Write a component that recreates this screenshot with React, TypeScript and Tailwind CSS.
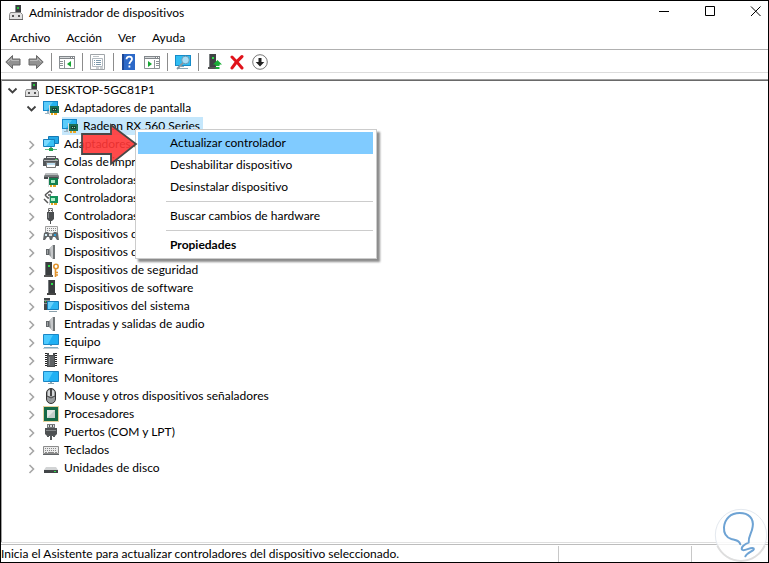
import { useState } from 'react';
import type { ReactNode } from 'react';

function Svg({ children }: { children: ReactNode }) {
  return (
    <svg viewBox="0 0 16 16" className="w-4 h-4 shrink-0" fill="none" aria-hidden="true">
      {children}
    </svg>
  );
}

const ComputerIcon = () => (
  <Svg>
    <path d="M7 0h6v8H7z" fill="#3c3f42" />
    <path d="M7 0h1v8H7z" fill="#85898c" />
    <path d="M9 2h2v2H9z" fill="#25c13b" />
    <path d="M2.500 7.500h10l2 2v5h-13v-5z" fill="#e2e2e2" stroke="#8a8a8a" />
    <path d="M4 10h2v2H4zM10 10h2v2h-2z" fill="#555" />
    <path d="M1 14h14v1H1z" fill="#666" />
  </Svg>
);

const DisplayAdapterIcon = () => (
  <Svg>
    <path d="M0 1h15v10H0z" fill="#1687c9" />
    <path d="M1 2h13v8H1z" fill="#27b3ef" />
    <path d="M1 2h9l-6 8H1z" fill="#5accfa" />
    <path d="M2 13h4v1H2zM4 11h2v2H4z" fill="#9bb5c4" />
    <path d="M7 6h9v7H7z" fill="#1b6f54" />
    <path d="M9 8h5v3H9z" fill="#173f35" />
    <path d="M10 9h1v1h-1zM12 9h1v1h-1z" fill="#8ddbb0" />
    <path d="M8 13h2v2H8zM11 13h3v2h-3z" fill="#eda81e" />
    <path d="M6 5h1v10H6z" fill="#d8dcdf" />
  </Svg>
);

const NetworkIcon = () => (
  <Svg>
    <path d="M5.500.5h10v7h-10z" fill="#24a9e7" stroke="#1579b4" />
    <path d="M.5 3.500h11v7H.5z" fill="#3cc2f5" stroke="#1680bd" />
    <path d="M1 4h7l-5 6H1z" fill="#7adaff" />
    <path d="M7 11h2v2H7z" fill="#83a58d" />
    <path d="M2 13h12v1H2z" fill="#66b887" />
    <path d="M6 12h4v3H6z" fill="#23a34f" />
  </Svg>
);

const PrinterIcon = () => (
  <Svg>
    <path d="M3 2h10v3H3z" fill="#55595d" />
    <path d="M4 3h8v1H4z" fill="#d9d9d9" />
    <path d="M1 4h14l1 2v6H0V6z" fill="#53575a" />
    <path d="M1 6h14v1H1z" fill="#b0b3b5" />
    <path d="M3.500 8.500h9v5h-9z" fill="#fff" stroke="#777" />
    <path d="M4 9h8v2H4z" fill="#bfe0f2" />
    <path d="M12 5h2v1h-2z" fill="#4ed35e" />
  </Svg>
);

const StorageControllerIcon = () => (
  <Svg>
    <path d="M3 1h11l2 3v3H1V4z" fill="#777b7d" />
    <path d="M3 1h11l1 2H2z" fill="#b9bcbe" />
    <path d="M1 5h14v2H1z" fill="#484c4e" />
    <path d="M6 6h9v7H6z" fill="#137f4f" />
    <path d="M8 8h4v3H8z" fill="#abebc7" />
    <path d="M7 13h2v2H7zM10 13h3v2h-3z" fill="#e2a423" />
    <path d="M5 5h1v10H5z" fill="#dcdfe1" />
  </Svg>
);

const IdeControllerIcon = () => (
  <Svg>
    <path d="M2 5l5-4 2 2M2 5l3 3h3" stroke="#555" strokeWidth="1.500" />
    <path d="M5 5h3M1 9l4 4" stroke="#555" strokeWidth="1.500" />
    <path d="M7 6h8v7H7z" fill="#15935a" />
    <path d="M8 8h4v3H8z" fill="#b0efcb" />
    <path d="M8 13h2v2H8zM11 13h3v2h-3z" fill="#e2a423" />
    <path d="M6 6h1v9H6z" fill="#bfc5c7" />
  </Svg>
);

const UsbIcon = () => (
  <Svg>
    <path d="M5.500.5h4v4h-4z" fill="#eee" stroke="#777" />
    <path d="M6 2h1v1H6zM8 2h1v1H8z" fill="#444" />
    <path d="M4 4h7v7l-2 2H6l-2-2z" fill="#4b4e50" />
    <path d="M5 5h1v5H5z" fill="#818588" />
    <path d="M7 12h1v4H7z" fill="#4b4e50" />
  </Svg>
);

const GameIcon = () => (
  <Svg>
    <path d="M2.500.5h12v7h-12z" fill="#f2f2f2" stroke="#a0a0a0" />
    <path d="M4 2.500h10M4 4.500h10" stroke="#888" strokeDasharray="1 1" />
    <path d="M0 14l1-7 2-1h2l2 2h2l2-2h2l2 1 1 7h-2l-2-3h-2l-1 3H7l-1-3H4l-2 3z" fill="#63686b" />
    <path d="M2 8h2v2H2z" fill="#d5eef7" />
    <path d="M11 8h2v2h-2z" fill="#2a9ed6" />
    <path d="M6 8h3v2H6z" fill="#dedede" />
  </Svg>
);

const SpeakerIcon = () => (
  <Svg>
    <path d="M3 5h3v6H3z" fill="#62676a" />
    <path d="M6 5l4-4v14l-4-4z" fill="#8b8f92" />
    <path d="M7 4l3-3v14l-2-2z" fill="#c6c8ca" />
    <path d="M11 1v14" stroke="#707476" strokeWidth="2" />
    <path d="M4 6h1v4H4z" fill="#a0a2a4" />
  </Svg>
);

const SecurityIcon = () => (
  <Svg>
    <path d="M2 0h7v14H2z" fill="#3b3e40" />
    <path d="M2 0h1v14H2z" fill="#787c7e" />
    <path d="M5 3h2v2H5z" fill="#2ee04a" />
    <path d="M1 13h9v2H1z" fill="#555" />
    <circle cx="13" cy="4.500" r="2.200" stroke="#e2942e" strokeWidth="1.600" />
    <path d="M12.500 7v8M13 10.500h2M13 13h2" stroke="#e2942e" strokeWidth="1.600" />
  </Svg>
);

const SoftwareIcon = () => (
  <Svg>
    <path d="M5 0h7v14H5z" fill="#393c3e" />
    <path d="M5 0h1v14H5z" fill="#73777a" />
    <path d="M8 3h2v2H8z" fill="#2ee04a" />
    <path d="M4 13h9v2H4z" fill="#444" />
  </Svg>
);

const SystemIcon = () => (
  <Svg>
    <path d="M1 0h6v12H1z" fill="#44484a" />
    <path d="M1 2h6v1H1zM1 5h6v1H1z" fill="#8d9193" />
    <path d="M2 3h1v1H2z" fill="#2ee04a" />
    <path d="M4.500 3.500h11v8h-11z" fill="#2cb5f1" stroke="#177eb9" />
    <path d="M5 4h6l-4 7H5z" fill="#68d1fb" />
    <path d="M6 13h8v1H6z" fill="#8aa0ab" />
  </Svg>
);

const PcIcon = () => (
  <Svg>
    <path d="M.5.5h15v10H.5z" fill="#1fb0f4" stroke="#1b86c5" />
    <path d="M1 1h9l-5 9H1z" fill="#4bcaff" />
    <path d="M7 11h2v1H7z" fill="#90a8b5" />
    <path d="M1 13h14v1H1z" fill="#7fabc2" />
    <path d="M0 14h16v1H0z" fill="#c3ced5" />
  </Svg>
);

const FirmwareIcon = () => (
  <Svg>
    <path d="M4 1h2v2h4V1h2v14H4z" fill="#4b4e50" />
    <path d="M5 4h6v10H5z" fill="#5f6366" />
    <path d="M3 1v14M13 1v14" stroke="#222" strokeWidth="2" strokeDasharray="1 1" />
    <path d="M6 5h1v8H6z" fill="#8b8f92" />
  </Svg>
);

const MonitorIcon = () => (
  <Svg>
    <path d="M.5 1.500h15v10H.5z" fill="#1fb0f4" stroke="#1b86c5" />
    <path d="M1 2h9l-5 9H1z" fill="#4bcaff" />
    <path d="M7 12h2v1H7z" fill="#90a8b5" />
    <path d="M5 13h6v1H5z" fill="#8ba3af" />
  </Svg>
);

const MouseIcon = () => (
  <Svg>
    <rect x="3.500" y="0.500" width="9" height="15" rx="4.500" fill="#9a9d9f" stroke="#333" />
    <path d="M5 3l2-1v6H5zM9 2l2 1v5H9z" fill="#d5d7d8" />
    <path d="M7 1h2v7H7z" fill="#444" />
    <path d="M4 8l4 2 4-2" stroke="#444" />
  </Svg>
);

const ProcessorIcon = () => (
  <Svg>
    <rect x="0.500" y="0.500" width="15" height="15" stroke="#cba43b" strokeDasharray="1 1" />
    <path d="M1 1h14v14H1z" fill="#166947" />
    <path d="M4 4h8v8H4z" fill="#c5cecb" />
    <path d="M4 4h8l-8 8z" fill="#e3e7e5" />
  </Svg>
);

const PortIcon = () => (
  <Svg>
    <path d="M4 0h8v4H4z" fill="#777b7d" />
    <path d="M5 1h6v2H5z" fill="#d9dbdc" />
    <path d="M6 1h1v2H6zM9 1h1v2H9z" fill="#555" />
    <path d="M2 4h12v6l-2 2H4l-2-2z" fill="#4e5153" />
    <path d="M3 6h10v1H3z" fill="#85898b" />
    <path d="M4 11h2v2H4zM7 11h2v5H7zM10 11h2v2h-2z" fill="#55595b" />
  </Svg>
);

const KeyboardIcon = () => (
  <Svg>
    <path d="M.5 4.500h15v7H.5z" fill="#ececec" stroke="#8c8c8c" />
    <path d="M2 6.500h12M2 8.500h12" stroke="#888" strokeDasharray="1 1" />
    <path d="M2 10.500h2M5 10.500h6M12 10.500h2" stroke="#888" />
    <path d="M0 12h16v1H0z" fill="#606467" />
  </Svg>
);

const DiskIcon = () => (
  <Svg>
    <path d="M3 7h10l2 3H1z" fill="#d2d4d5" />
    <path d="M1 10h14v3H1z" fill="#424648" />
    <path d="M11 11h2v1h-2z" fill="#2ee04a" />
  </Svg>
);

const ArrowIcon = ({ flip }: { flip?: boolean }) => (
  <svg viewBox="0 0 16 16" className={flip ? 'w-4 h-4 -scale-x-100' : 'w-4 h-4'} aria-hidden="true">
    <path d="M.8 8L7.500 1.500V5H15v6H7.500v3.500z" fill="#929292" stroke="#686868" />
    <path d="M3 8l3.500-3.500v2H14" fill="none" stroke="#b9b9b9" />
  </svg>
);

const PaneIcon = ({ right }: { right?: boolean }) => (
  <Svg>
    <path d="M.5 2.500h15v12H.5z" fill="#fff" stroke="#8b9094" />
    <path d="M0 2h16v3H0z" fill="#82878b" />
    <path d="M1 3h10v1H1z" fill="#d6d9db" />
    <path d="M12 3h1v1h-1zM14 3h1v1h-1z" fill="#fff" />
    <path d={right ? 'M10.500 6v8' : 'M5.500 6v8'} stroke="#8b9094" />
    {right ? (
      <>
        <path d="M4 7v6l4-3z" fill="#15a532" />
        <path d="M12 7.500h3M12 9.500h3M12 11.500h3" stroke="#8b9094" />
      </>
    ) : (
      <>
        <path d="M12 7v6l-4-3z" fill="#15a532" />
        <path d="M1 7.500h3M1 9.500h3M1 11.500h3" stroke="#8b9094" />
      </>
    )}
  </Svg>
);

const PropertiesIcon = () => (
  <Svg>
    <path d="M.5.5h14v15H.5z" fill="#fff" stroke="#a0a5a9" />
    <path d="M2.500 4.500h10v8h-10z" stroke="#b3bac0" />
    <path d="M3 2.500h6" stroke="#bcc2c6" />
    <path d="M4 6.500h1M6 6.500h5M4 8.500h1M6 8.500h5M4 10.500h1M6 10.500h5" stroke="#7b98ab" />
    <path d="M6 14h3M10 14h3" stroke="#9aa2a9" />
  </Svg>
);

const HelpIcon = () => (
  <Svg>
    <path d="M1 0h13v16H1z" fill="#2c69c8" />
    <path d="M1 0h2v16H1z" fill="#1d4897" />
    <path d="M5.500 5.200C5.500 1.600 11 1.800 11 5c0 2.300-2.600 2.400-2.600 5M8.400 11.500v2" stroke="#fff" strokeWidth="1.800" />
  </Svg>
);

const ScanIcon = () => (
  <Svg>
    <path d="M0 1h16v11H0z" fill="#168bc8" />
    <path d="M1 2h14v9H1z" fill="#30bdf2" />
    <path d="M6 12h3v1H6zM3 14h10v1H3z" fill="#8aa7b6" />
    <circle cx="10.500" cy="6" r="3.800" fill="#a9ddf5" stroke="#6b9cb6" />
    <path d="M8 9l-6 6" stroke="#8798a2" strokeWidth="1.800" />
  </Svg>
);

const UpdateIcon = () => (
  <Svg>
    <path d="M3 0h7v14H3z" fill="#3f4244" />
    <path d="M3 0h1v14H3z" fill="#7b7f81" />
    <path d="M6 3h2v2H6z" fill="#2ee04a" />
    <path d="M2 13h8v2H2z" fill="#555" />
    <path d="M11.500 6L16 10.500h-2.500V12h-4v-1.500H7z" fill="#18ae36" />
    <path d="M9.500 13h4v2h-4z" fill="#18ae36" />
  </Svg>
);

const RemoveIcon = () => (
  <Svg>
    <path d="M3 3c3 3 6 6 10 11M13 2.500C9 6 6 9 3 14" stroke="#e0131b" strokeWidth="3" strokeLinecap="round" />
  </Svg>
);

const DisableIcon = () => (
  <Svg>
    <circle cx="8" cy="8" r="7.300" fill="#fff" stroke="#777" />
    <path d="M6.500 4h3v4h2.800L8 12.500 3.700 8h2.800z" fill="#222" />
  </Svg>
);

function Chevron({ open }: { open: boolean }) {
  return (
    <svg viewBox="0 0 12 12" className="w-3 h-3" fill="none" aria-hidden="true">
      {open ? (
        <path d="M1.500 4.500l4 4 4-4" stroke="#404040" strokeWidth="1.800" />
      ) : (
        <path d="M3.500 3l4 4-4 4" stroke="#a6a6a6" strokeWidth="1.600" />
      )}
    </svg>
  );
}

const devices = [
  { name: 'Adaptadores de red', icon: <NetworkIcon /> },
  { name: 'Colas de impresión', icon: <PrinterIcon /> },
  { name: 'Controladoras', icon: <StorageControllerIcon /> },
  { name: 'Controladoras', icon: <IdeControllerIcon /> },
  { name: 'Controladoras', icon: <UsbIcon /> },
  { name: 'Dispositivos de', icon: <GameIcon /> },
  { name: 'Dispositivos de', icon: <SpeakerIcon /> },
  { name: 'Dispositivos de seguridad', icon: <SecurityIcon /> },
  { name: 'Dispositivos de software', icon: <SoftwareIcon /> },
  { name: 'Dispositivos del sistema', icon: <SystemIcon /> },
  { name: 'Entradas y salidas de audio', icon: <SpeakerIcon /> },
  { name: 'Equipo', icon: <PcIcon /> },
  { name: 'Firmware', icon: <FirmwareIcon /> },
  { name: 'Monitores', icon: <MonitorIcon /> },
  { name: 'Mouse y otros dispositivos señaladores', icon: <MouseIcon /> },
  { name: 'Procesadores', icon: <ProcessorIcon /> },
  { name: 'Puertos (COM y LPT)', icon: <PortIcon /> },
  { name: 'Teclados', icon: <KeyboardIcon /> },
  { name: 'Unidades de disco', icon: <DiskIcon /> },
];

const tools = [
  { label: 'Atrás', icon: <ArrowIcon /> },
  { label: 'Adelante', icon: <ArrowIcon flip /> },
  null,
  { label: 'Mostrar u ocultar árbol', icon: <PaneIcon /> },
  null,
  { label: 'Propiedades', icon: <PropertiesIcon /> },
  null,
  { label: 'Ayuda', icon: <HelpIcon /> },
  { label: 'Mostrar u ocultar panel', icon: <PaneIcon right /> },
  null,
  { label: 'Buscar cambios de hardware', icon: <ScanIcon /> },
  null,
  { label: 'Actualizar controlador', icon: <UpdateIcon /> },
  { label: 'Desinstalar dispositivo', icon: <RemoveIcon /> },
  { label: 'Deshabilitar dispositivo', icon: <DisableIcon /> },
];

const menuItems = [
  'Actualizar controlador',
  'Deshabilitar dispositivo',
  'Desinstalar dispositivo',
  null,
  'Buscar cambios de hardware',
  null,
  'Propiedades',
];

function TreeRow({ name, icon, open, onToggle }: { name: string; icon: ReactNode; open: boolean; onToggle?: () => void }) {
  return (
    <div className="flex items-center gap-[5px] h-[18px]">
      <button type="button" aria-label={name} aria-expanded={open} onClick={onToggle}>
        <Chevron open={open} />
      </button>
      {icon}
      <span>{name}</span>
    </div>
  );
}

function ContextMenu() {
  const [active, setActive] = useState('Actualizar controlador');

  return (
    <div
      role="menu"
      className="absolute left-[133px] top-[49px] w-[242px] p-[2px] pr-[3px] bg-white border border-[#ccc] shadow-[3px_3px_2px_rgba(0,0,0,0.45)]"
    >
      {menuItems.map((item, idx) =>
        item === null ? (
          <div key={idx} role="separator" className="h-px my-[3px] ml-7 bg-[#ccc]" />
        ) : (
          <button
            key={idx}
            type="button"
            role="menuitem"
            onMouseEnter={() => setActive(item)}
            className={`block w-full h-[22px] pl-8 text-left ${active === item ? 'bg-[#80cbff]' : ''} ${item === 'Propiedades' ? 'font-bold' : ''}`}
          >
            {item}
          </button>
        )
      )}
    </div>
  );
}

function App() {
  const [rootOpen, setRootOpen] = useState(true);
  const [displayOpen, setDisplayOpen] = useState(true);

  return (
    <div className="relative flex flex-col h-screen overflow-hidden bg-white border border-black text-black text-[12px] leading-[18px] [font-variant-ligatures:none] font-[Lato,'Open_Sans',sans-serif]">
      <header className="flex items-center justify-between h-6 px-[7px] shrink-0">
        <div className="flex items-center gap-[5px]">
          <ComputerIcon />
          <h1>Administrador de dispositivos</h1>
        </div>
        <div className="flex items-center gap-[35px] pb-1">
          <button type="button" aria-label="Minimizar">
            <svg viewBox="0 0 11 11" className="w-[11px] h-[11px]"><path d="M1 5.500h10" stroke="#000" /></svg>
          </button>
          <button type="button" aria-label="Maximizar">
            <svg viewBox="0 0 11 11" className="w-[11px] h-[11px]"><path d="M1.500.5h9v9h-9z" fill="none" stroke="#000" /></svg>
          </button>
          <button type="button" aria-label="Cerrar">
            <svg viewBox="0 0 11 11" className="w-[11px] h-[11px]"><path d="M1 .5l9.500 9.500M10.500.5L1 10" stroke="#000" /></svg>
          </button>
        </div>
      </header>

      <nav className="flex items-center gap-4 h-[25px] pt-[2px] pl-[9px] border-b border-[#b0b0b0] shrink-0">
        <button type="button">Archivo</button>
        <button type="button">Acción</button>
        <button type="button">Ver</button>
        <button type="button">Ayuda</button>
      </nav>

      <div role="toolbar" className="flex items-center gap-[7px] h-[23px] pt-[2px] pl-1 border-b border-[#dcdcdc] shrink-0">
        {tools.map((tool, idx) =>
          tool === null ? (
            <div key={idx} className="w-px h-[18px] bg-[#8c8c8c]" />
          ) : (
            <button key={idx} type="button" aria-label={tool.label}>
              {tool.icon}
            </button>
          )
        )}
      </div>

      <main className="relative flex-1 min-h-0 mt-[6px] border-t border-l border-[#a0a0a0]">
        <div className="h-full pl-[5px] border-t border-[#696969]">
          <TreeRow name="DESKTOP-5GC81P1" icon={<ComputerIcon />} open={rootOpen} onToggle={() => setRootOpen(!rootOpen)} />
          {rootOpen && (
            <ul className="pl-[19px]">
              <li>
                <TreeRow
                  name="Adaptadores de pantalla"
                  icon={<DisplayAdapterIcon />}
                  open={displayOpen}
                  onToggle={() => setDisplayOpen(!displayOpen)}
                />
                {displayOpen && (
                  <div className="flex h-[18px] pl-9">
                    <div className="flex items-center gap-[5px] pr-[3px] bg-[#c5e7fc]">
                      <DisplayAdapterIcon />
                      <span>Radeon RX 560 Series</span>
                    </div>
                  </div>
                )}
              </li>
              {devices.map((device, idx) => (
                <li key={idx}>
                  <TreeRow name={device.name} icon={device.icon} open={false} />
                </li>
              ))}
            </ul>
          )}
        </div>
        <ContextMenu />
        <svg viewBox="0 0 58 46" className="absolute left-[79px] top-[42px] w-[58px] h-[46px] pointer-events-none" aria-hidden="true">
          <path d="M1 12h29V3l25 19-25 20V32H1z" fill="#ff3636" fillOpacity="0.9" stroke="#484848" strokeWidth="1.800" />
        </svg>
      </main>

      <footer className="shrink-0 border-t border-[#dedede] pt-px">
        <div className="flex h-[18px] border-t border-[#bdbdbd] pt-px">
          <p className="flex-1 leading-4 whitespace-nowrap">Inicia el Asistente para actualizar controladores del dispositivo seleccionado.</p>
          <div className="w-[133px] border-l border-[#c8c8c8]" />
          <div className="w-[77px] border-l border-[#c8c8c8]" />
        </div>
      </footer>

      <svg viewBox="28 24 162 162" className="absolute right-0 bottom-0 w-[54px] h-[54px]" fill="none" aria-hidden="true">
        <circle cx="109" cy="105" r="77" fill="#fff" fillOpacity="0.8" stroke="#e4e9ef" strokeWidth="3" />
        <path d="M38 137a78 78 0 0 0 142 0" stroke="#dedede" strokeWidth="6" />
        <path
          d="M107 133C104 120 92 120 80 117C62 111 57 98 58 82C60 56 78 39 105 39C132 39 148 55 144 80C142 100 131 106 132 128C120 132 108 142 112 149C118 156 138 140 147 145C152 152 128 156 122 169"
          stroke="#6ea3d4"
          strokeWidth="6"
          strokeLinecap="round"
          strokeLinejoin="round"
        />
      </svg>
    </div>
  );
}

export default App;
